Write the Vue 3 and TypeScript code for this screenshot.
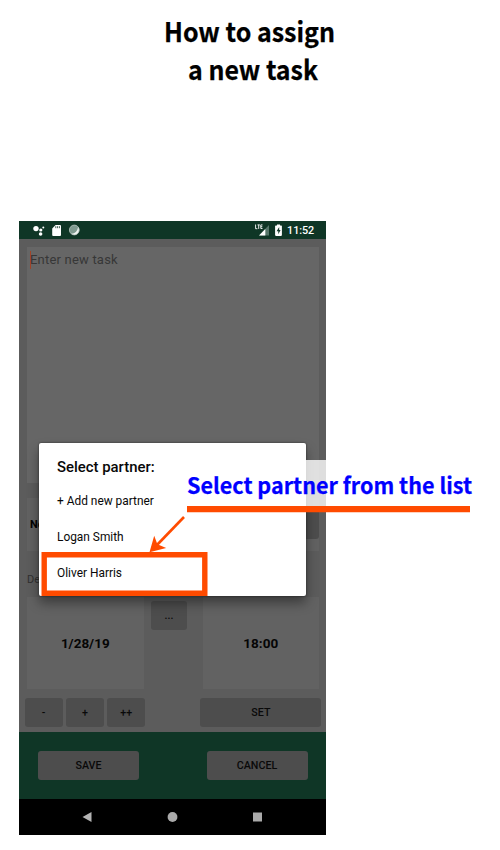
<script setup lang="ts">
import { ref } from 'vue'

const partners = ref<string[]>(['+ Add new partner', 'Logan Smith', 'Oliver Harris'])
const dateSteps: string[] = ['-', '+', '++']
</script>

<template>
  <main class="page">
    <svg class="title" width="500" height="100" viewBox="0 0 500 100">
      <text x="164" y="42" textLength="171" lengthAdjust="spacingAndGlyphs">How to assign</text>
      <text x="188" y="80" textLength="130" lengthAdjust="spacingAndGlyphs">a new task</text>
    </svg>

    <section class="phone">
      <header class="status">
        <svg class="status-left" width="48" height="18" viewBox="0 0 48 18">
          <g fill="#fff">
            <circle cx="3" cy="7.6" r="2.7" />
            <circle cx="7.8" cy="9" r="1.6" />
            <circle cx="7.6" cy="13" r="1.8" />
            <circle cx="10.3" cy="6.6" r="1" />
            <path d="M22.6 4H27q1 0 1 1v9q0 1-1 1h-6.8q-1 0-1-1V7.4z" />
          </g>
          <path d="M22.8 5.2v2M24.6 5.2v2M26.4 5.2v2" stroke="#0f3626" stroke-width=".8" />
          <circle cx="41.3" cy="9" r="4.9" fill="#7f9a90" />
          <path d="M45.2 6.1a4.9 4.9 0 0 1-7 6.7q5.6.2 7-6.7z" fill="#f0f4f2" />
          <circle cx="41.3" cy="9" r="4.9" fill="none" stroke="#b5c4be" stroke-width=".8" />
        </svg>
        <svg class="status-right" width="29" height="18" viewBox="0 0 29 18">
          <path d="M14 4v10.5H4z" fill="#56766a" />
          <path d="M10.3 8v6.5H4z" fill="#fff" />
          <path d="M.6 3.5v4.2h1.8M2.5 3.9h2.3M3.7 3.9v4M7.5 3.9H5.8v3.6h1.7M5.8 5.7h1.5" fill="none" stroke="#fff" stroke-width=".9" />
          <path d="M22 3.4h3v1h1.2q.7 0 .7.7v9q0 .8-.7.8h-5.3q-.8 0-.8-.8v-9q0-.7.8-.7H22z" fill="#fff" />
          <path d="M24.2 6l-2.6 4.2h1.7v3l2.3-4.2h-1.4z" fill="#0f3626" />
        </svg>
        <span class="clock">11:52</span>
      </header>

      <div class="form">
        <div class="task-input"><i class="caret"></i>Enter new task</div>
        <div class="notify">
          <b>No</b>
          <span class="notify-button"></span>
        </div>
        <div class="deadline">De</div>
        <div class="date-row">
          <div class="value">1/28/19</div>
          <button class="btn more">...</button>
          <div class="value">18:00</div>
        </div>
        <div class="step-row">
          <button v-for="step in dateSteps" :key="step" class="btn step">{{ step }}</button>
          <button class="btn set">SET</button>
        </div>
      </div>

      <footer class="actions">
        <button class="btn">SAVE</button>
        <button class="btn">CANCEL</button>
      </footer>

      <nav class="nav">
        <svg width="307" height="36" viewBox="0 0 307 36">
          <path d="M63.5 18l9-5v10z" fill="#b4b4b4" />
          <circle cx="153.5" cy="18" r="4.9" fill="#aaa" />
          <path d="M234 13.5h9v9h-9z" fill="#aaa" />
        </svg>
      </nav>

      <div class="dialog">
        <h2>Select partner:</h2>
        <ul>
          <li v-for="partner in partners" :key="partner">{{ partner }}</li>
        </ul>
      </div>
    </section>

    <svg class="annotation" width="500" height="180" viewBox="0 0 500 180">
      <path d="M306 20h20v47h-20z" fill="#fff" fill-opacity=".8" />
      <path d="M187 66h283v6.3H187z" fill="#ff4b00" />
      <text x="187" y="54" textLength="285" lengthAdjust="spacingAndGlyphs">Select partner from the list</text>
      <path d="M184 77l-28 29" stroke="#ff4b00" stroke-width="2.6" />
      <path d="M149.5 112.3L154.2 95.8l3.2 8.5 8.8 3.7z" fill="#ff4b00" />
      <path d="M44.2 114.8h160.6v38.4H44.2z" fill="none" stroke="#ff4b00" stroke-width="5.4" />
    </svg>
  </main>
</template>

<style>
body {
  background: #fff;
}
</style>

<style scoped>
.page {
  position: relative;
  width: 500px;
  height: 850px;
  overflow: hidden;
  font-family: Roboto, "Liberation Sans", sans-serif;
}
.title {
  display: block;
  font: bold 27px "Noto Sans CJK JP", sans-serif;
  stroke: #000;
  stroke-width: .25px;
}
.phone {
  position: relative;
  display: flex;
  flex-direction: column;
  width: 307px;
  height: 614px;
  margin: 121px 0 0 19px;
  overflow: hidden;
  background: #5c5c5c;
}
.status {
  display: flex;
  align-items: center;
  box-sizing: border-box;
  height: 18px;
  padding: 0 12px 0 14px;
  background: #0f3626;
}
.status-right {
  margin-left: auto;
}
.clock {
  margin-left: 3px;
  padding-top: 2px;
  color: #fff;
  font-size: 10.8px;
  font-weight: 500;
  line-height: 18px;
  letter-spacing: -.1px;
}
.form {
  box-sizing: border-box;
  height: 493px;
  padding-top: 8px;
}
.task-input {
  box-sizing: border-box;
  width: 292px;
  height: 236px;
  margin-left: 8px;
  padding: 3px;
  display: flex;
  background: #666;
  color: #373737;
  font-size: 13px;
  line-height: 20px;
  letter-spacing: .2px;
}
.caret {
  flex: none;
  width: 1px;
  height: 18px;
  margin-top: 1px;
  margin-right: -1px;
  background: #a04428;
}
.notify {
  display: flex;
  align-items: center;
  justify-content: space-between;
  width: 292px;
  height: 53px;
  margin: 15px 0 0 7.5px;
  background: #626262;
  font-size: 11px;
}
.notify b {
  padding-left: 3.5px;
}
.notify-button {
  width: 70px;
  height: 29px;
  border-radius: 3px;
  background: #4d4d4d;
}
.deadline {
  height: 46px;
  padding: 0 8px;
  box-sizing: border-box;
  color: #303030;
  font-size: 11px;
  line-height: 58px;
}
.date-row {
  display: flex;
  width: 292px;
  height: 92px;
  margin-left: 8px;
}
.value {
  width: 116.5px;
  background: #626262;
  color: #050505;
  font-size: 13.5px;
  font-weight: 700;
  line-height: 93px;
  text-align: center;
}
.btn {
  height: 29px;
  padding: 0;
  border: 0;
  border-radius: 3px;
  background: #4d4d4d;
  color: #090909;
  font: 500 10.7px Roboto, sans-serif;
}
.more {
  width: 36px;
  margin: 4px 15.5px 0 7.5px;
}
.step-row {
  display: flex;
  gap: 3px;
  margin: 8.5px 0 0 5.5px;
}
.step {
  width: 38.3px;
}
.set {
  width: 121px;
  margin-left: 52px;
}
.actions {
  display: flex;
  justify-content: space-between;
  box-sizing: border-box;
  height: 67px;
  padding: 19px 18.5px 0 19px;
  background: #0f3626;
}
.actions .btn {
  width: 101px;
}
.nav {
  height: 36px;
  background: #000;
}
.nav svg {
  display: block;
}
.dialog {
  position: absolute;
  left: 20px;
  top: 222px;
  box-sizing: border-box;
  width: 267px;
  height: 153px;
  padding: 15px 18px 0;
  border-radius: 2px;
  background: #fff;
  color: #080808;
  box-shadow: 0 0 2px #222, 0 7px 12px rgba(0, 0, 0, .4);
}
.dialog h2 {
  margin: 0;
  font-size: 14.9px;
  font-weight: 500;
  line-height: 18px;
}
.dialog ul {
  margin: 7px 0 0;
  padding: 0;
  list-style: none;
}
.dialog li {
  height: 36px;
  font-size: 11.9px;
  line-height: 36px;
}
.annotation {
  position: absolute;
  left: 0;
  top: 440px;
  fill: #00f;
  font: bold 22px "Noto Sans CJK JP", sans-serif;
}
.annotation text {
  stroke: #00f;
  stroke-width: .25px;
}
</style>
